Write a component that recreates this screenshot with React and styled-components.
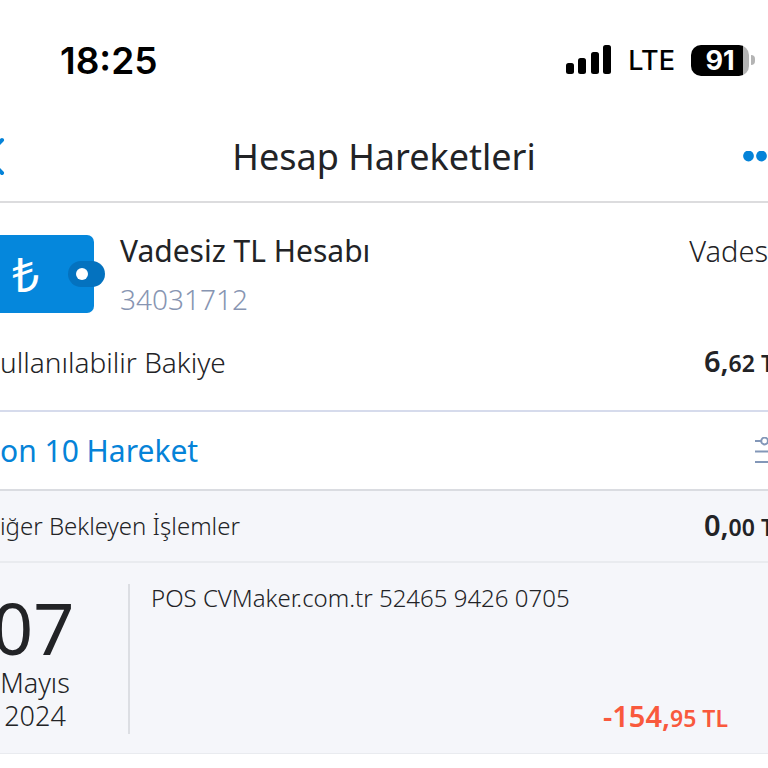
import React from "react";
import styled, { createGlobalStyle } from "styled-components";

const GlobalStyle = createGlobalStyle`
  * {
    box-sizing: border-box;
  }
  body {
    margin: 0;
    background-color: #ffffff;
    color: #222326;
    font-family: "Noto Sans", "Open Sans", sans-serif;
    overflow-x: hidden;
  }
  h1, h2, p {
    margin: 0;
    font-weight: 400;
  }
`;

const Screen = styled.main`
  width: 100%;
  overflow: hidden;
  white-space: nowrap;
`;

const StatusBar = styled.div`
  display: flex;
  align-items: center;
  justify-content: space-between;
  height: 112px;
  padding: 8px 13px 0 60px;
  color: #000000;
  font-family: Inter, sans-serif;
`;

const Clock = styled.time`
  font-size: 37px;
  font-weight: 600;
`;

const StatusIcons = styled.div`
  display: flex;
  align-items: center;
  gap: 16px;
`;

const Network = styled.span`
  font-size: 27px;
  font-weight: 500;
`;

const Battery = styled.div`
  display: flex;
  align-items: center;
  gap: 2px;
`;

const BatteryBody = styled.div`
  width: 58px;
  height: 31px;
  border-radius: 10px;
  background: linear-gradient(to right, #000000 52px, #b4b4b4 52px);
  color: #ffffff;
  font-size: 27px;
  font-weight: 700;
  line-height: 31px;
  text-align: center;
`;

const BatteryCap = styled.div`
  width: 4px;
  height: 10px;
  border-radius: 0 4px 4px 0;
  background-color: #b4b4b4;
`;

const Header = styled.header`
  display: grid;
  grid-template-columns: 60px 1fr 60px;
  align-items: center;
  height: 91px;
  border-bottom: 2px solid #dcdcde;
`;

const Title = styled.h1`
  font-size: 36px;
  line-height: 48px;
  text-align: center;
`;

const IconButton = styled.button`
  display: flex;
  justify-content: ${(props) => props.$align || "flex-start"};
  padding: 0;
  border: 0;
  background: none;
  color: ${(props) => props.$color || "#0583d8"};
`;

const Account = styled.section`
  display: flex;
  flex-direction: column;
  gap: 18px;
  height: 209px;
  padding-top: 24px;
  border-bottom: 2px solid #d6dbec;
`;

const AccountTop = styled.div`
  display: flex;
  align-items: flex-start;
`;

const Wallet = styled.div`
  display: flex;
  align-items: center;
  justify-content: space-between;
  width: 94px;
  height: 78px;
  margin: 8px 26px 0 0;
  padding-left: 12px;
  border-radius: 0 7px 7px 0;
  background-color: #0587dc;
  color: #ffffff;
  font-size: 48px;
  line-height: 44px;
`;

const Clasp = styled.span`
  flex: none;
  display: flex;
  align-items: center;
  width: 37px;
  height: 26px;
  margin-right: -11px;
  padding-left: 8px;
  border-radius: 13px;
  background-color: #0472bf;

  &::before {
    content: "";
    width: 12px;
    height: 12px;
    border-radius: 50%;
    background-color: #ffffff;
  }
`;

const AccountInfo = styled.div`
  flex: 1;
`;

const AccountName = styled.h2`
  font-size: 30px;
  line-height: 48px;
`;

const AccountNumber = styled.p`
  color: #8795b2;
  font-size: 28px;
  font-weight: 300;
  line-height: 48px;
`;

const AccountType = styled.p`
  font-size: 29px;
  font-weight: 300;
  line-height: 48px;
`;

const Row = styled.div`
  display: flex;
  align-items: center;
  justify-content: space-between;
`;

const Label = styled.span`
  font-size: ${(props) => props.$size || 28}px;
  font-weight: 300;
  line-height: 40px;
`;

const Amount = styled.strong`
  margin-right: ${(props) => (props.$inset ? 40 : -6)}px;
  color: ${(props) => props.$color || "inherit"};
  font-size: 29px;
  font-weight: 600;
  line-height: 40px;

  small {
    font-size: 23px;
  }
`;

const FilterRow = styled(Row)`
  height: 79px;
  border-bottom: 2px solid #dadce1;
`;

const FilterTitle = styled.h2`
  color: #0583d8;
  font-size: 30px;
  line-height: 40px;
`;

const PendingRow = styled(Row)`
  height: 72px;
  border-bottom: 2px solid #e9ebef;
  background-color: #f5f6fa;
`;

const Transaction = styled.article`
  display: flex;
  height: 191px;
  padding: 21px 0 19px;
  border-bottom: 1px solid #e9ebef;
  background-color: #f5f6fa;
`;

const DateBox = styled.div`
  width: 130px;
  padding-top: 4px;
  border-right: 2px solid #dcdee3;
`;

const DateText = styled.div`
  width: 70px;
  font-size: 27px;
  font-weight: 300;
  line-height: 33px;
  text-align: center;
`;

const Day = styled.div`
  margin-left: -8px;
  font-size: 72px;
  font-weight: 400;
  line-height: 78px;
`;

const Details = styled.div`
  flex: 1;
  display: flex;
  flex-direction: column;
  justify-content: space-between;
  padding-left: 21px;
`;

const Description = styled.p`
  font-size: 24px;
  font-weight: 300;
  line-height: 28px;
`;

const Total = styled.div`
  display: flex;
  justify-content: flex-end;
  line-height: 32px;

  ${Amount} {
    line-height: 32px;
  }
`;

function Signal() {
  return (
    <svg width="46" height="30" viewBox="0 0 46 30" aria-hidden="true">
      <rect x="0" y="18" width="8" height="11" rx="2.5" />
      <rect x="12" y="13" width="8" height="16" rx="2.5" />
      <rect x="25" y="7" width="8" height="22" rx="2.5" />
      <rect x="37" y="0" width="8" height="29" rx="2.5" />
    </svg>
  );
}

function Back() {
  return (
    <svg width="5" height="40" viewBox="15 0 5 40" aria-hidden="true">
      <path
        d="M17 3 L1 19.5 L17 36"
        fill="none"
        stroke="currentColor"
        strokeWidth="4"
        strokeLinecap="round"
      />
    </svg>
  );
}

function More() {
  return (
    <svg width="25" height="12" viewBox="0 0 25 12" aria-hidden="true">
      <circle cx="5.5" cy="5" r="5.4" fill="currentColor" />
      <circle cx="18.5" cy="5" r="5.4" fill="currentColor" />
    </svg>
  );
}

function Filter() {
  return (
    <svg width="13" height="28" viewBox="0 0 13 28" aria-hidden="true">
      <g fill="none" stroke="currentColor" strokeWidth="2">
        <path d="M0 4 H6 M0 14.5 H13 M0 25 H13" />
        <circle cx="9.6" cy="4" r="3.4" />
      </g>
    </svg>
  );
}

export default function App() {
  return (
    <>
      <GlobalStyle />
      <Screen>
        <StatusBar>
          <Clock>18:25</Clock>
          <StatusIcons>
            <Signal />
            <Network>LTE</Network>
            <Battery>
              <BatteryBody>91</BatteryBody>
              <BatteryCap />
            </Battery>
          </StatusIcons>
        </StatusBar>
        <Header>
          <IconButton aria-label="Geri">
            <Back />
          </IconButton>
          <Title>Hesap Hareketleri</Title>
          <IconButton aria-label="Menü" $align="flex-end">
            <More />
          </IconButton>
        </Header>
        <Account>
          <AccountTop>
            <Wallet>
              ₺
              <Clasp />
            </Wallet>
            <AccountInfo>
              <AccountName>Vadesiz TL Hesabı</AccountName>
              <AccountNumber>34031712</AccountNumber>
            </AccountInfo>
            <AccountType>Vades</AccountType>
          </AccountTop>
          <Row>
            <Label>ullanılabilir Bakiye</Label>
            <Amount>
              6,<small>62 T</small>
            </Amount>
          </Row>
        </Account>
        <FilterRow>
          <FilterTitle>on 10 Hareket</FilterTitle>
          <IconButton aria-label="Filtrele" $color="#8397b8">
            <Filter />
          </IconButton>
        </FilterRow>
        <PendingRow>
          <Label $size={24}>iğer Bekleyen İşlemler</Label>
          <Amount>
            0,<small>00 T</small>
          </Amount>
        </PendingRow>
        <Transaction>
          <DateBox>
            <DateText>
              <Day>07</Day>
              <div>Mayıs</div>
              <div>2024</div>
            </DateText>
          </DateBox>
          <Details>
            <Description>POS CVMaker.com.tr 52465 9426 0705</Description>
            <Total>
              <Amount $inset $color="#f9593d">
                -154,<small>95 TL</small>
              </Amount>
            </Total>
          </Details>
        </Transaction>
      </Screen>
    </>
  );
}
